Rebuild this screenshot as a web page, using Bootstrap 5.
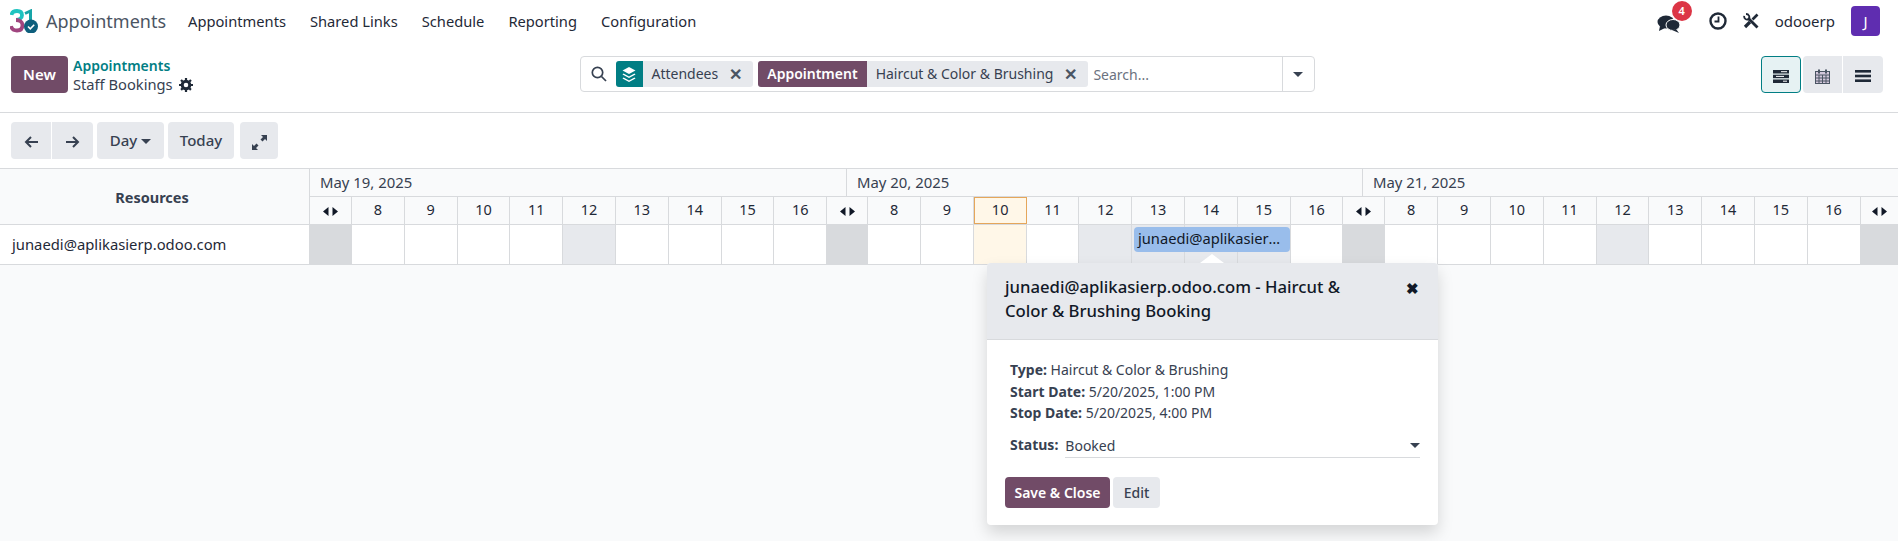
<!DOCTYPE html>
<html lang="en">
<head>
  <meta charset="UTF-8" />
  <title>Staff Bookings</title>
  <link href="https://cdn.jsdelivr.net/npm/bootstrap@5.3.3/dist/css/bootstrap.min.css" rel="stylesheet" />
  <style>
    body {
      font-family: "Noto Sans", "Open Sans", sans-serif;
      font-size: 14px;
      color: #374151;
      overflow: hidden;
      height: 541px;
      background: #fff;
    }
    .top-bar {
      height: 42px;
      margin-bottom: 4px;
      padding: 0 18px 0 10px;
      color: #1f2937;
      font-size: 14.7px;
    }
    .brand-name {
      font-size: 18px;
      color: #4b5563;
      margin: 0 22px 0 8px;
    }
    .top-link {
      color: #1f2937;
      text-decoration: none;
      margin-right: 24px;
    }
    .user-name { margin: 0 16px; font-size: 15px; }
    .avatar-box {
      width: 29px;
      height: 30px;
      background: #5f2db0;
      color: #fff;
      border-radius: 4px;
      font-size: 15px;
    }
    .msg-wrap { position: relative; width: 24px; height: 20px; margin-right: 28px; }
    .msg-badge {
      position: absolute;
      left: 15px;
      top: -10px;
      width: 20px;
      height: 20px;
      border-radius: 50%;
      background: #dc3545;
      color: #fff;
      font-size: 11px;
      font-weight: 600;
    }
    .clock-icon { margin-right: 16px; }
    .panel-grid {
      display: grid;
      grid-template-columns: 1fr 735px 1fr;
      height: 67px;
      padding: 10px 15px 0 11px;
      border-bottom: 1px solid #d8dadd;
    }
    .odoo-btn {
      background: #e7e9ed;
      color: #374151;
      border: 0;
      border-radius: 4px;
      font-size: 14px;
      font-weight: 500;
      padding: 0;
      height: 37px;
    }
    .btn-big { font-size: 15px; }
    .primary-btn {
      background: #714b67;
      color: #fff;
      font-weight: 600;
      width: 57px;
    }
    .crumbs { margin-left: 5px; }
    .crumb-active { color: #017e84; font-weight: 600; line-height: 19px; }
    .crumb-sub { line-height: 19px; font-size: 14.7px; }
    .gear-icon { margin-left: 3px; vertical-align: -2px; }
    .search-box {
      height: 36px;
      border: 1px solid #d8dadd;
      border-radius: 4px;
    }
    .search-left { flex: 1; padding-left: 10px; gap: 5px; min-width: 0; }
    .facet {
      height: 26px;
      background: #e7e9ed;
      border-radius: 3px;
      overflow: hidden;
      line-height: 26px;
    }
    .facet-tag {
      background: #017e84;
      color: #fff;
      width: 27px;
      height: 26px;
    }
    .facet-tag-text {
      background: #714b67;
      color: #fff;
      font-weight: 600;
      padding: 0 9px;
    }
    .facet-value { padding: 0 0 0 9px; }
    .facet-x {
      width: 35px;
      font-size: 16px;
      font-weight: 700;
      text-align: center;
      color: #4b5563;
    }
    .search-hint { color: #6b7280; }
    .search-caret { width: 32px; border-left: 1px solid #d8dadd; height: 100%; }
    .down-tri {
      display: inline-block;
      border-top: 5px solid #374151;
      border-left: 5px solid transparent;
      border-right: 5px solid transparent;
      vertical-align: 2px;
    }
    .view-btn { width: 40px; }
    .view-on {
      background: #e6f2f3;
      border: 1px solid #017e84;
    }
    .view-mid { width: 39px; margin-left: 2px; }
    .view-last { margin-left: 1px; }
    .tool-row { padding: 9px 11px; height: 55px; }
    .arrow-btn { width: 40px; }
    .arrow-next { width: 41px; margin-left: 1px; }
    .day-btn { width: 67px; }
    .today-btn { width: 66px; }
    .expand-btn { width: 38px; margin-left: 6px; }
    .gantt-area {
      position: relative;
      border-top: 1px solid #d8dadd;
      background: #f9fafb;
      height: 400px;
    }
    .gantt-head { background: #f9fafb; height: 56px; border-bottom: 1px solid #d8dadd; }
    .res-col {
      width: 310px;
      flex: none;
      border-right: 1px solid #d8dadd;
    }
    .res-title { font-size: 14.5px; padding: 2px 5px 0 0; }
    .date-row { height: 28px; border-bottom: 1px solid #d8dadd; font-size: 14.9px; }
    .date-cell {
      line-height: 26px;
      padding-left: 10px;
      border-right: 1px solid #d8dadd;
    }
    .date-first { width: 537px; }
    .date-second { width: 516px; }
    .hours-grid {
      display: grid;
      grid-template-columns: 42px repeat(9, 52.8px) 41px repeat(9, 52.8px) 42px repeat(9, 52.8px) 38px;
    }
    .hour-cell {
      border-right: 1px solid #d8dadd;
      text-align: center;
      color: #1f2937;
      font-size: 14.5px;
      height: 27px;
      line-height: 25px;
    }
    .hour-cell:last-child { border-right: 0; }
    .hour-now {
      background: #fff7e8;
      border: 1px solid #e5a65a;
      line-height: 23px;
    }
    .row-body { height: 40px; border-bottom: 1px solid #d8dadd; background: #fff; }
    .row-name { padding-left: 12px; line-height: 39px; color: #1f2937; font-size: 14.8px; }
    .row-cell { border-right: 1px solid #d8dadd; height: 39px; }
    .row-cell:last-child { border-right: 0; }
    .cell-off { background: #d8dadd; }
    .cell-break { background: #e7e9ed; }
    .cell-now { background: #fff7e8; }
    .booking-pill {
      position: absolute;
      left: 1134px;
      top: 58px;
      width: 156px;
      height: 25px;
      background: #99bdeb;
      border-radius: 4px;
      color: #111827;
      padding: 0 4px;
      font-size: 14.7px;
      line-height: 23px;
      white-space: nowrap;
      overflow: hidden;
      text-overflow: ellipsis;
    }
    .booking-pop {
      position: absolute;
      left: 987px;
      top: 94px;
      width: 451px;
      height: 262px;
      background: #fff;
      border-radius: 4px;
      box-shadow: 0 .5rem 1rem rgba(0, 0, 0, .15);
    }
    .booking-pop::before {
      content: "";
      position: absolute;
      left: 213px;
      top: -9px;
      border-bottom: 9px solid #fff;
      border-left: 12px solid transparent;
      border-right: 12px solid transparent;
    }
    .pop-head {
      height: 77px;
      background: #e7e9ed;
      border-bottom: 1px solid #d8dadd;
      border-radius: 4px 4px 0 0;
      padding: 12px 19px 0 18px;
    }
    .pop-title {
      font-size: 16.7px;
      font-weight: 500;
      line-height: 24px;
      color: #111827;
      margin: 0;
      width: 345px;
    }
    .pop-close { font-weight: 700; color: #111827; font-size: 15px; padding-top: 2px; }
    .pop-body { padding: 19px 18px 0 23px; }
    .info-line { line-height: 21.7px; }
    .status-line { margin-top: 10px; }
    .status-value {
      flex: 1;
      margin-left: 7px;
      height: 24px;
      border-bottom: 1px solid #d8dadd;
    }
    .pop-actions { margin: 19px 0 0 -5px; gap: 3px; }
    .pop-actions .odoo-btn { height: 31px; }
    .save-btn { width: 105px; }
    .edit-btn { width: 47px; }
  </style>
</head>
<body>
  <nav class="top-bar d-flex align-items-center">
    <svg width="28" height="24" viewBox="0 0 28 24" fill="none">
      <path d="M1.500 6C2 2.500 5 2 7 2c3.500 0 5 2 5 4.300C12 9 9.500 10.800 6 10.800" stroke="#1fc3c0" stroke-width="3.800" />
      <path d="M6 11c4 0 6.500 2 6.500 5 0 4-2.500 5.500-5.500 5.500-3.500 0-5.500-2-6-4.500" stroke="#a0457f" stroke-width="3.800" />
      <path d="M15 4.500L20.500 2V12" stroke="#17a5a8" stroke-width="3" />
      <circle cx="21" cy="17.500" r="7" fill="#0e5f7d" />
      <path d="M18 17.500l2.300 2.300 3.900-4" stroke="#fff" stroke-width="1.600" />
    </svg>
    <span class="brand-name">Appointments</span>
    <a class="top-link" href="#">Appointments</a>
    <a class="top-link" href="#">Shared Links</a>
    <a class="top-link" href="#">Schedule</a>
    <a class="top-link" href="#">Reporting</a>
    <a class="top-link" href="#">Configuration</a>
    <div class="ms-auto d-flex align-items-center">
      <div class="msg-wrap">
        <svg width="24" height="20" viewBox="0 0 24 20" fill="#1f2937">
          <ellipse cx="9" cy="8" rx="8.500" ry="6.500" />
          <path d="M3 12l-1 5 6-3z" />
          <ellipse cx="16" cy="11" rx="7" ry="5.500" stroke="#fff" stroke-width="1" />
          <path d="M19 15l3 4-7-3z" />
        </svg>
        <span class="msg-badge d-flex align-items-center justify-content-center">4</span>
      </div>
      <svg class="clock-icon" width="18" height="18" viewBox="0 0 18 18" fill="none" stroke="#1f2937" stroke-width="2.400">
        <circle cx="9" cy="9" r="7.500" />
        <path d="M9.500 4.500v5H5.500" stroke-width="1.800" />
      </svg>
      <svg width="16" height="16" viewBox="0 0 16 16" fill="none" stroke="#1f2937">
        <path d="M5 5l9.500 9.500" stroke-width="2.800" />
        <path d="M1.200 2.800A3.300 3.300 0 0 0 5.500 6.500 3.300 3.300 0 0 0 3 1" stroke-width="1.800" />
        <path d="M14.500 1.500L9.500 6.500" stroke-width="2.600" />
        <path d="M7 9L2 14" stroke-width="3.200" />
      </svg>
      <span class="user-name">odooerp</span>
      <div class="avatar-box d-flex align-items-center justify-content-center">J</div>
    </div>
  </nav>

  <div class="panel-grid">
    <div class="d-flex">
      <button class="odoo-btn primary-btn btn-big">New</button>
      <div class="crumbs">
        <div class="crumb-active">Appointments</div>
        <div class="crumb-sub">Staff Bookings
          <svg class="gear-icon" width="14" height="14" viewBox="0 0 14 14">
            <circle cx="7" cy="7" r="3.800" fill="none" stroke="#1f2937" stroke-width="3" />
            <path d="M7 0v14M0 7h14M2 2l10 10M12 2L2 12" stroke="#1f2937" stroke-width="2.200" stroke-dasharray="2.200 9.600" />
          </svg>
        </div>
      </div>
    </div>

    <div class="search-box d-flex align-items-center">
      <div class="search-left d-flex align-items-center">
        <svg width="16" height="16" viewBox="0 0 16 16" fill="none" stroke="#374151" stroke-width="1.700" class="me-1">
          <circle cx="6.500" cy="6.500" r="5.200" />
          <path d="M10.500 10.500l4.500 4.500" />
        </svg>
        <div class="facet d-flex">
          <span class="facet-tag d-flex align-items-center justify-content-center">
            <svg width="16" height="17" viewBox="0 0 16 17" fill="#fff">
              <path d="M8 1l6.500 3.500L8 8 1.500 4.500z" />
              <path d="M2.500 7.500L8 10.500l5.500-3 1 1L8 12 1.500 8.500z" />
              <path d="M2.500 11.500L8 14.500l5.500-3 1 1L8 16 1.500 12.500z" />
            </svg>
          </span>
          <span class="facet-value">Attendees</span>
          <span class="facet-x">&#10005;</span>
        </div>
        <div class="facet d-flex">
          <span class="facet-tag-text">Appointment</span>
          <span class="facet-value">Haircut &amp; Color &amp; Brushing</span>
          <span class="facet-x">&#10005;</span>
        </div>
        <span class="search-hint">Search...</span>
      </div>
      <div class="search-caret d-flex align-items-center justify-content-center"><span class="down-tri"></span></div>
    </div>

    <div class="d-flex justify-content-end">
      <button class="odoo-btn view-btn view-on">
        <svg width="16" height="13" viewBox="0 0 16 13" fill="#1f2937">
          <rect width="16" height="3.500" /><rect y="4.700" width="16" height="3.500" /><rect y="9.500" width="16" height="3.500" />
          <path d="M8 1.700h6M3 6.400h8M10 11.200h4" stroke="#fff" stroke-width="1" />
        </svg>
      </button>
      <button class="odoo-btn view-btn view-mid rounded-end-0">
        <svg width="15" height="15" viewBox="0 0 15 15" fill="none" stroke="#4b5563">
          <rect x=".5" y="2.500" width="14" height="12" fill="#d4c8dc" />
          <path d="M.5 6h14M.5 9h14M.5 12h14M4 6v8M7.500 6v8M11 6v8" />
          <path d="M4 .5v4M11 .5v4" stroke-width="2" />
        </svg>
      </button>
      <button class="odoo-btn view-btn view-last rounded-start-0">
        <svg width="16" height="12" viewBox="0 0 16 12" fill="#1f2937">
          <rect width="16" height="2.600" /><rect y="4.700" width="16" height="2.600" /><rect y="9.400" width="16" height="2.600" />
        </svg>
      </button>
    </div>
  </div>

  <div class="tool-row d-flex">
    <button class="odoo-btn arrow-btn rounded-end-0">
      <svg width="14" height="12" viewBox="0 0 14 12" fill="none" stroke="#374151" stroke-width="2"><path d="M14 6H2M7 1L2 6l5 5" /></svg>
    </button>
    <button class="odoo-btn arrow-next rounded-start-0">
      <svg width="14" height="12" viewBox="0 0 14 12" fill="none" stroke="#374151" stroke-width="2"><path d="M0 6h12M7 1l5 5-5 5" /></svg>
    </button>
    <button class="odoo-btn day-btn btn-big ms-1">Day <span class="down-tri"></span></button>
    <button class="odoo-btn today-btn btn-big ms-1">Today</button>
    <button class="odoo-btn expand-btn">
      <svg width="15" height="15" viewBox="0 0 15 15" fill="#374151">
        <path d="M9 0h6v6l-2-2-2.500 2.500-2-2L11 2zM6 15H0V9l2 2 2.500-2.500 2 2L4 13z" />
      </svg>
    </button>
  </div>

  <div class="gantt-area">
    <div class="gantt-head d-flex">
      <div class="res-col res-title d-flex align-items-center justify-content-center fw-bold">Resources</div>
      <div class="flex-grow-1">
        <div class="date-row d-flex">
          <div class="date-cell date-first">May 19, 2025</div>
          <div class="date-cell date-second">May 20, 2025</div>
          <div class="date-cell flex-grow-1 border-0">May 21, 2025</div>
        </div>
        <div class="hours-grid" id="hoursHead"></div>
      </div>
    </div>
    <div class="row-body d-flex">
      <div class="res-col row-name">junaedi@aplikasierp.odoo.com</div>
      <div class="hours-grid flex-grow-1" id="hoursBody"></div>
    </div>
    <div class="booking-pill">junaedi@aplikasierp.odoo.com</div>

    <div class="booking-pop">
      <div class="pop-head d-flex justify-content-between">
        <h5 class="pop-title">junaedi@aplikasierp.odoo.com - Haircut &amp; Color &amp; Brushing Booking</h5>
        <span class="pop-close">&#10006;</span>
      </div>
      <div class="pop-body">
        <div class="info-line"><b>Type:</b> Haircut &amp; Color &amp; Brushing</div>
        <div class="info-line"><b>Start Date:</b> 5/20/2025, 1:00 PM</div>
        <div class="info-line"><b>Stop Date:</b> 5/20/2025, 4:00 PM</div>
        <div class="status-line d-flex">
          <b>Status:</b>
          <div class="status-value d-flex justify-content-between align-items-center">Booked <span class="down-tri"></span></div>
        </div>
        <div class="pop-actions d-flex">
          <button class="odoo-btn primary-btn save-btn">Save &amp; Close</button>
          <button class="odoo-btn edit-btn">Edit</button>
        </div>
      </div>
    </div>
  </div>

  <script>
    const hoursHead = document.getElementById('hoursHead');
    const hoursBody = document.getElementById('hoursBody');
    const hours = [8, 9, 10, 11, 12, 13, 14, 15, 16];
    const arrows = '<svg width="15" height="9" viewBox="0 0 15 9" fill="#111827"><path d="M5.500 0v9L0 4.500zM9.500 0v9L15 4.500z"/></svg>';

    function addGap() {
      hoursHead.insertAdjacentHTML('beforeend', `<div class="hour-cell">${arrows}</div>`);
      hoursBody.insertAdjacentHTML('beforeend', '<div class="row-cell cell-off"></div>');
    }

    [19, 20, 21].forEach(day => {
      addGap();
      hours.forEach(h => {
        const isNow = day === 20 && h === 10;
        let bodyClass = '';
        if (isNow) bodyClass = 'cell-now';
        if (h === 12 || (day === 20 && h > 12 && h < 16)) bodyClass = 'cell-break';
        hoursHead.insertAdjacentHTML('beforeend', `<div class="hour-cell ${isNow ? 'hour-now' : ''}">${h}</div>`);
        hoursBody.insertAdjacentHTML('beforeend', `<div class="row-cell ${bodyClass}"></div>`);
      });
    });
    addGap();
  </script>
  <script src="https://cdn.jsdelivr.net/npm/bootstrap@5.3.3/dist/js/bootstrap.bundle.min.js"></script>
</body>
</html>
